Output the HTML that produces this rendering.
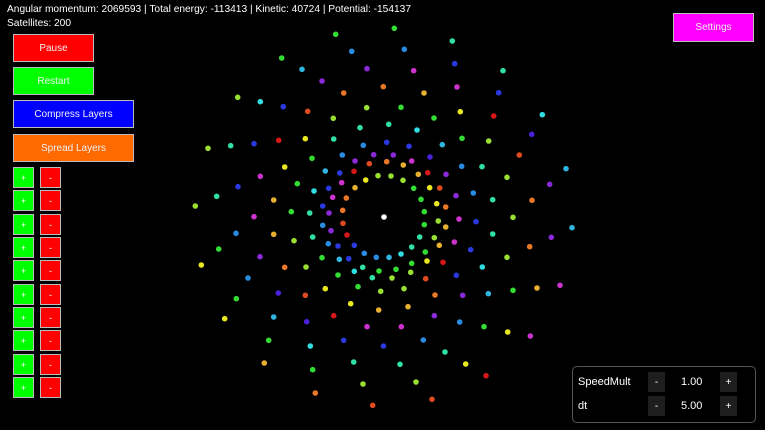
<!DOCTYPE html>
<html><head><meta charset="utf-8"><style>
body{margin:0;width:765px;height:430px;background:#000;overflow:hidden;position:relative;font-family:"Liberation Sans",sans-serif;color:#fff}
.t{position:absolute;left:7px;font-size:10.2px;white-space:nowrap}
.b{position:absolute;box-sizing:border-box;border:1px solid #bbb;color:#f0f0f0;font-size:10px;display:flex;align-items:center;justify-content:center}
.s{position:absolute;width:21px;height:21px;box-sizing:border-box;border:1px solid #bbb;color:#fff;font-size:9px;display:flex;align-items:center;justify-content:center}
.panel{position:absolute;left:572px;top:366px;width:184px;height:57px;box-sizing:border-box;border:1px solid #555;border-radius:5px}
.pl{position:absolute;font-size:11px}
.pb{position:absolute;width:17px;height:20px;background:#1e1e1e;font-size:10px;display:flex;align-items:center;justify-content:center}
</style></head><body>
<div class="t" style="top:4px">Angular momentum: 2069593 | Total energy: -113413 | Kinetic: 40724 | Potential: -154137</div>
<div class="t" style="top:18px">Satellites: 200</div>
<div class="b" style="left:13px;top:34px;width:81px;height:28px;background:#ff0000">Pause</div>
<div class="b" style="left:13px;top:67px;width:81px;height:28px;background:#00ff00">Restart</div>
<div class="b" style="left:13px;top:100px;width:121px;height:28px;background:#0000ff">Compress Layers</div>
<div class="b" style="left:13px;top:134px;width:121px;height:28px;background:#ff6a00">Spread Layers</div>
<div class="b" style="left:673px;top:13px;width:81px;height:29px;background:#ff00ff">Settings</div>
<div class="panel"></div>
<div class="pl" style="left:578px;top:376px">SpeedMult</div>
<div class="pl" style="left:578px;top:400px">dt</div>
<div class="pb" style="left:648px;top:372px">-</div>
<div class="pb" style="left:648px;top:396px">-</div>
<div class="pl" style="left:681px;top:376px">1.00</div>
<div class="pl" style="left:681px;top:400px">5.00</div>
<div class="pb" style="left:720px;top:372px">+</div>
<div class="pb" style="left:720px;top:396px">+</div>
<div class="s" style="left:13px;top:167px;background:#00ff00">+</div><div class="s" style="left:40px;top:167px;background:#ff0000">-</div>
<div class="s" style="left:13px;top:190px;background:#00ff00">+</div><div class="s" style="left:40px;top:190px;background:#ff0000">-</div>
<div class="s" style="left:13px;top:214px;background:#00ff00">+</div><div class="s" style="left:40px;top:214px;background:#ff0000">-</div>
<div class="s" style="left:13px;top:237px;background:#00ff00">+</div><div class="s" style="left:40px;top:237px;background:#ff0000">-</div>
<div class="s" style="left:13px;top:260px;background:#00ff00">+</div><div class="s" style="left:40px;top:260px;background:#ff0000">-</div>
<div class="s" style="left:13px;top:284px;background:#00ff00">+</div><div class="s" style="left:40px;top:284px;background:#ff0000">-</div>
<div class="s" style="left:13px;top:307px;background:#00ff00">+</div><div class="s" style="left:40px;top:307px;background:#ff0000">-</div>
<div class="s" style="left:13px;top:330px;background:#00ff00">+</div><div class="s" style="left:40px;top:330px;background:#ff0000">-</div>
<div class="s" style="left:13px;top:354px;background:#00ff00">+</div><div class="s" style="left:40px;top:354px;background:#ff0000">-</div>
<div class="s" style="left:13px;top:377px;background:#00ff00">+</div><div class="s" style="left:40px;top:377px;background:#ff0000">-</div>
<svg width="765" height="430" style="position:absolute;left:0;top:0">
<g id="d"></g>
</svg>
<script>
var C={g:"#33dd33",l:"#99e033",y:"#e8e820",oy:"#e8b030",o:"#e87828",ro:"#e04a20",r:"#d81818",m:"#cc33cc",p:"#8a2ad8",bp:"#4a20d8",b:"#2a3ae0",bl:"#2a8ce0",cb:"#30b4e0",c:"#30dde0",t:"#30e0a8",w:"#ffffff"};
var D=[[335.7,34.3,"g"],[351.7,51.3,"bl"],[281.7,58,"g"],[302,69.3,"cb"],[367,68.7,"p"],[322,81,"p"],[383.3,86.7,"o"],[343.7,93,"o"],[237.7,97.3,"l"],[260.3,101.7,"c"],[283.3,106.7,"b"],[366.7,107.7,"l"],[307.7,111.3,"ro"],[333.3,118.3,"l"],[360,127.7,"t"],[208,148.3,"l"],[230.7,145.7,"t"],[254,143.7,"b"],[278.7,140.3,"r"],[305.3,138.7,"y"],[333.7,139,"t"],[363.3,145.3,"bl"],[342.3,155,"bl"],[373.7,154.7,"p"],[355,161,"p"],[369.3,163.7,"ro"],[312,158.3,"g"],[284.7,167,"y"],[325.3,171,"cb"],[339.7,173,"b"],[354,171.3,"r"],[378,175.7,"l"],[260.3,176.3,"m"],[365.7,180,"y"],[238,186.7,"b"],[297.3,183.7,"g"],[341.7,182.7,"m"],[355,187.7,"oy"],[216.7,196.3,"t"],[273.7,200,"oy"],[314,191,"c"],[328.7,188.3,"b"],[332.7,197.3,"m"],[346.3,198,"o"],[195.3,206,"l"],[322.7,206,"b"],[342.7,210.3,"o"],[291.3,211.7,"g"],[309.7,213,"t"],[329,213,"p"],[254,216.7,"m"],
[394.3,28.3,"g"],[452.3,41,"t"],[404.3,49.3,"bl"],[454.7,63.7,"b"],[413.7,70.7,"m"],[503,70.7,"t"],[424,93,"oy"],[457,87,"m"],[498.7,92.7,"b"],[401,107.3,"g"],[434,118,"g"],[460.3,111.7,"y"],[493.7,116,"r"],[542.3,114.7,"c"],[388.7,124.3,"t"],[417,130,"c"],[531.7,134.3,"bp"],[462,138.3,"g"],[488.7,141,"l"],[386.7,142.3,"b"],[409,146.3,"b"],[442.3,144.7,"cb"],[393.3,155,"p"],[430,157,"bp"],[519.3,155,"ro"],[386.7,161.7,"o"],[403.3,165,"oy"],[411.7,161,"m"],[461.7,166.3,"bl"],[482,166.7,"t"],[566,168.7,"cb"],[391,176,"l"],[418.3,174.3,"oy"],[427.7,172.7,"r"],[446,174.3,"p"],[507,177.3,"l"],[403,180.3,"l"],[549.7,184.3,"p"],[413.7,188.3,"g"],[429.7,187.7,"y"],[439.7,188,"ro"],[456,195.7,"p"],[473.3,193,"bl"],[421,199.3,"g"],[436.7,203.7,"y"],[445.7,207,"o"],[492.7,199.7,"t"],[532,200.3,"o"],[424.3,211.7,"g"],
[343,223.3,"ro"],[322.7,225.3,"bl"],[236,233.3,"bl"],[273.7,234.3,"oy"],[331,230.7,"p"],[347,235,"r"],[312.7,237,"t"],[294,240.7,"l"],[218.7,249,"g"],[328.3,243.7,"bl"],[338,246,"b"],[354.3,245.3,"b"],[364.3,253.3,"bl"],[376.3,257.3,"bl"],[260,256.7,"p"],[322,257.7,"g"],[339.3,259.3,"cb"],[348.7,258.7,"b"],[201.3,265,"y"],[284.7,267.3,"o"],[306,267,"l"],[354.3,271.3,"c"],[362.7,267.3,"t"],[379,271,"g"],[248,278,"bl"],[338,275,"g"],[372.3,277.7,"t"],[358,286.7,"g"],[380.7,291.3,"l"],[325.3,288.7,"y"],[278.3,293,"bp"],[305.3,295.3,"ro"],[236.3,298.7,"g"],[350.7,303.7,"y"],[378.7,310,"oy"],[224.7,318.7,"y"],[273.7,317,"cb"],[333.7,315.7,"r"],[306.7,321.7,"bp"],[367,326.7,"m"],[268.7,340.3,"g"],[310.3,346,"c"],[343.7,340.3,"b"],[383.5,346,"b"],[264.3,363,"oy"],[353.7,362,"t"],[312.7,369.7,"g"],[363,384,"l"],[315.3,393,"o"],[372.7,405.3,"ro"],
[384,217,"w"],[438.3,221,"l"],[459,219,"m"],[476,221.7,"b"],[513,217.3,"l"],[424.3,224.7,"g"],[445.7,227,"oy"],[419.7,237,"t"],[434.3,237.7,"l"],[492.7,234,"t"],[572,227.7,"cb"],[551.3,237.3,"p"],[411.7,247,"t"],[439.3,245.3,"oy"],[454.3,242,"m"],[470.7,249.7,"b"],[529.7,246.7,"o"],[389,257.3,"cb"],[401,254,"c"],[425.3,252,"g"],[411.7,263.3,"g"],[427,261,"y"],[443,262.3,"r"],[507,257.3,"l"],[396,269.3,"g"],[410.7,272.3,"l"],[482.3,267,"c"],[392,278,"l"],[425.7,278.7,"ro"],[456.3,275.3,"b"],[404,288.7,"l"],[435,295,"o"],[462.7,295.3,"p"],[488.3,293.7,"cb"],[513,290.3,"g"],[537,288,"oy"],[560,285.3,"m"],[408,306.7,"oy"],[434.3,315.7,"p"],[401.3,326.7,"m"],[459.7,322,"bl"],[484,326.7,"g"],[507.7,332,"y"],[530.3,336,"m"],[423.3,340,"bl"],[445,352,"t"],[400,364.3,"t"],[465.7,364,"y"],[486,375.7,"r"],[416,382,"l"],[432,399.3,"ro"]];
var s="";D.forEach(function(a){s+='<circle cx="'+a[0]+'" cy="'+a[1]+'" r="2.8" fill="'+C[a[2]]+'"/>';});
document.getElementById("d").innerHTML=s;
</script>
</body></html>
